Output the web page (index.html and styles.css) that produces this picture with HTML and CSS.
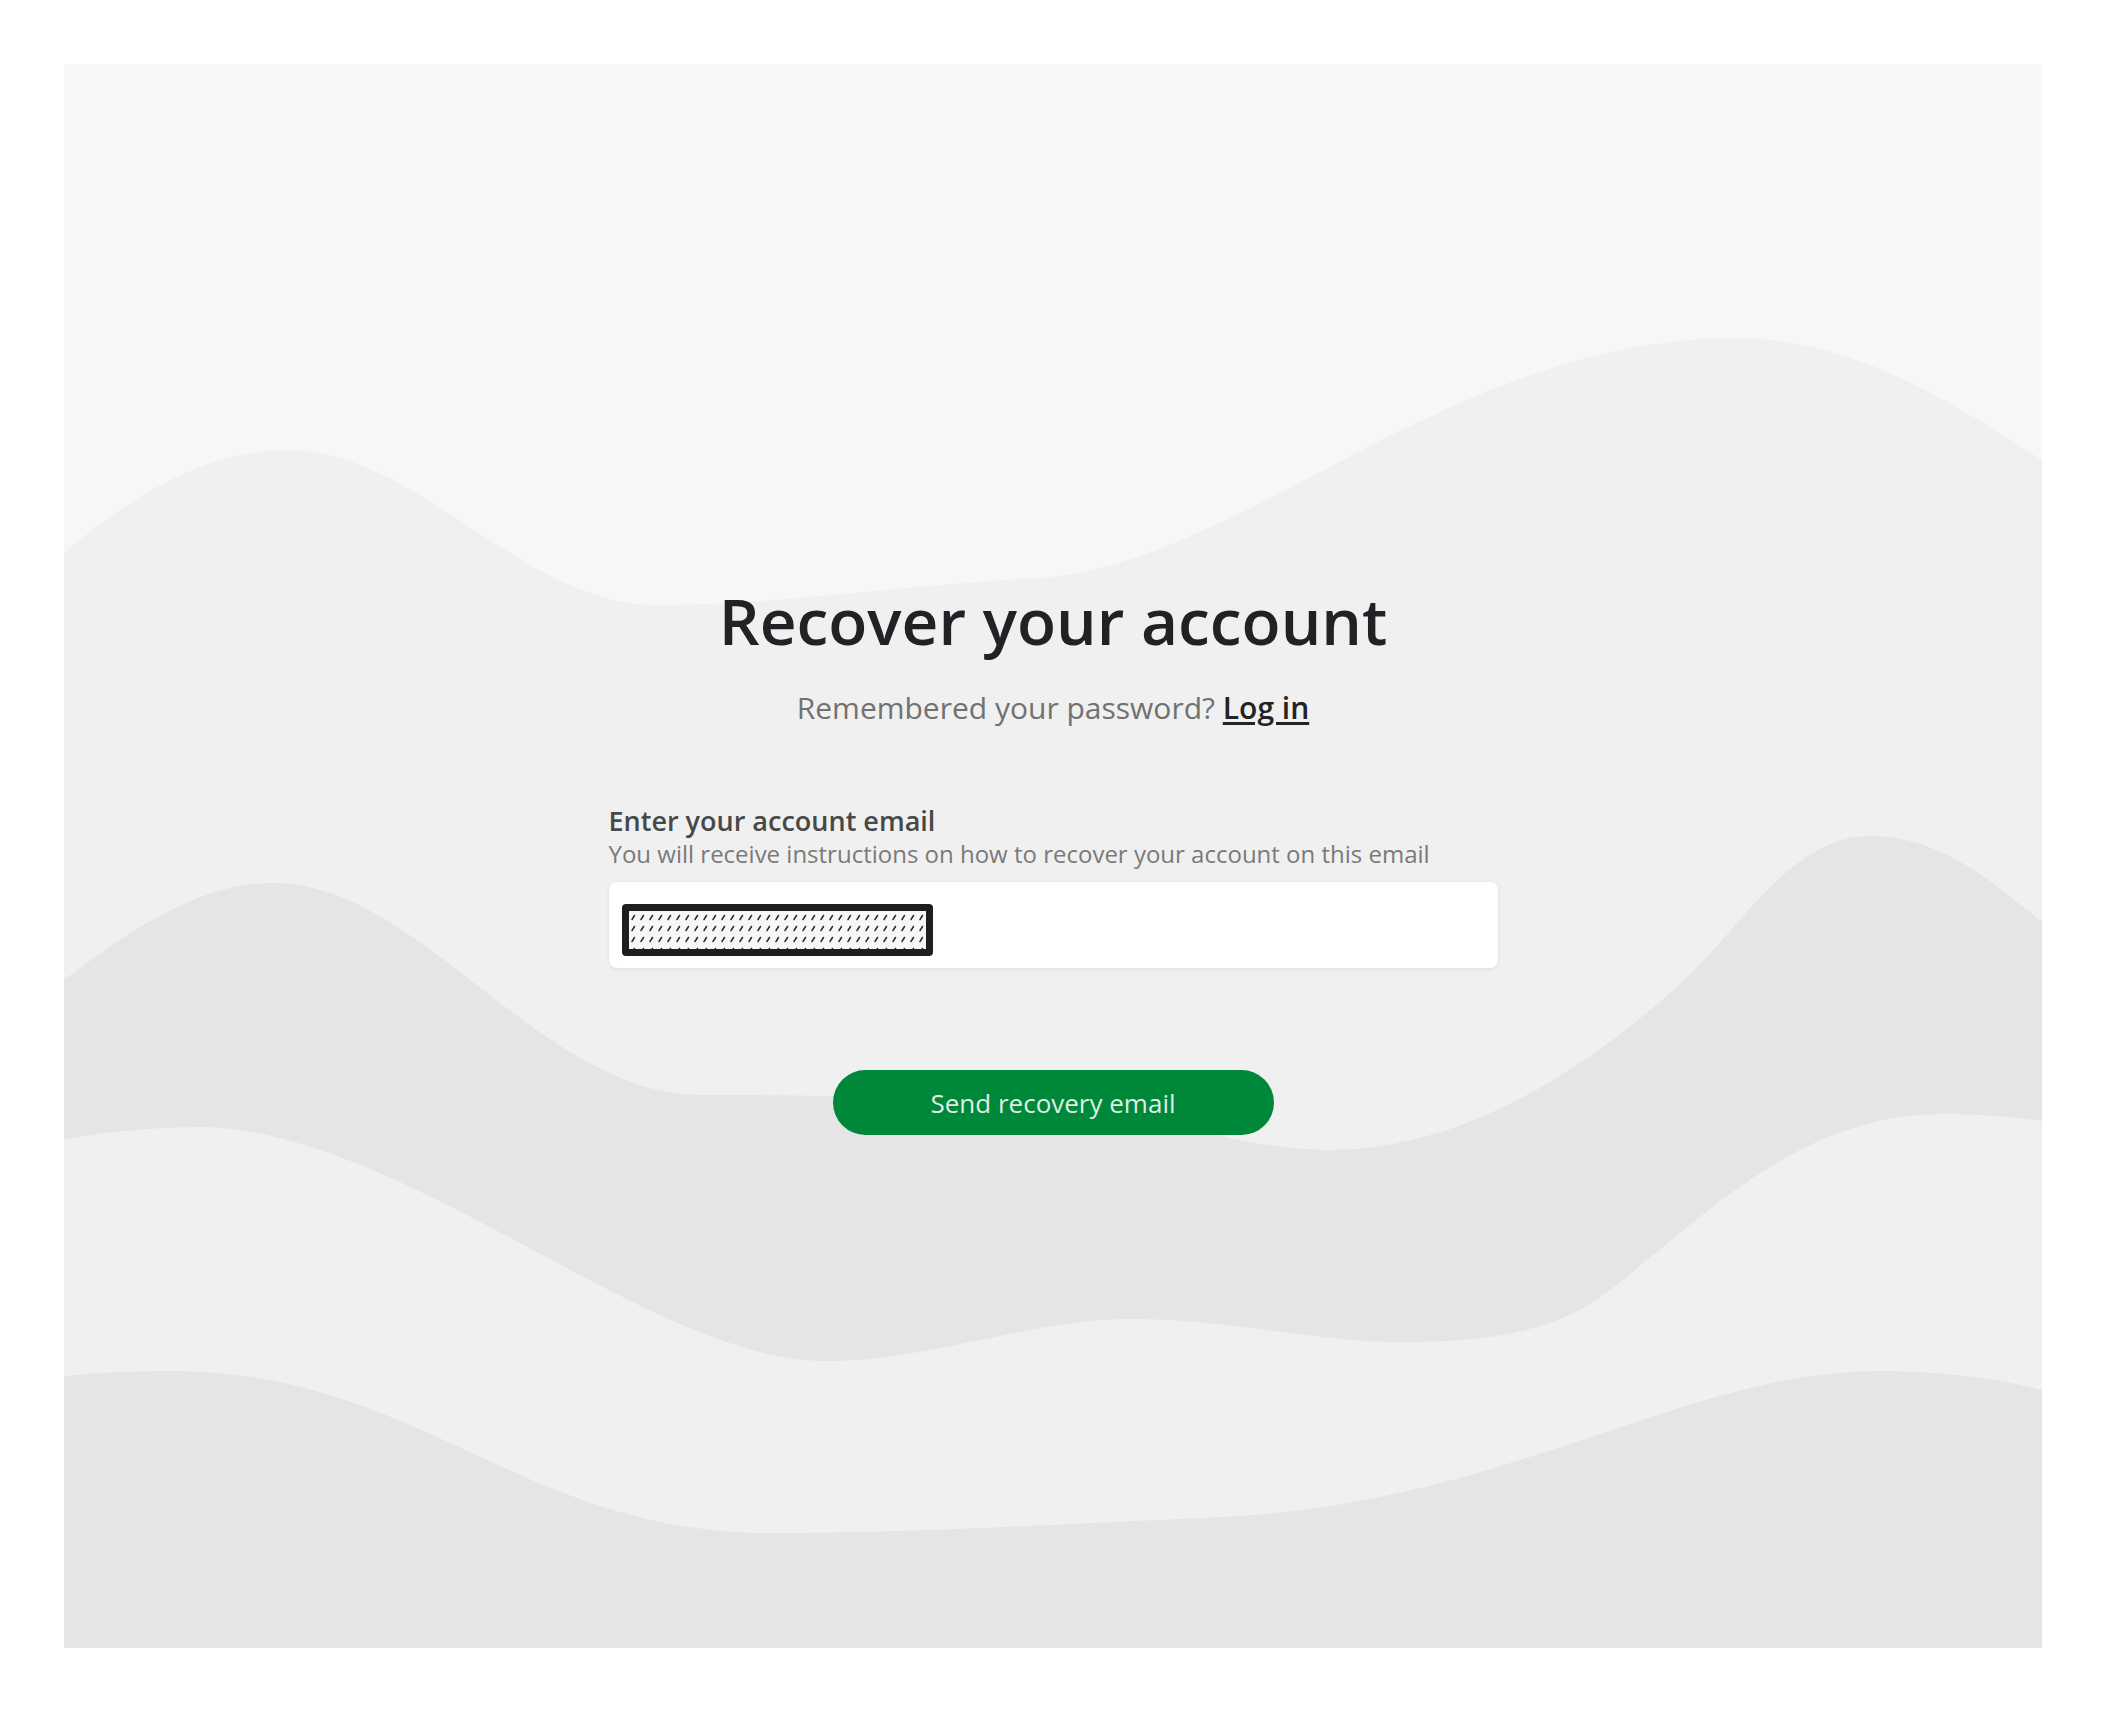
FILE: index.html
```html
<!DOCTYPE html>
<html lang="en">
<head>
<meta charset="utf-8">
<title>Recover your account</title>
<link rel="stylesheet" href="styles.css">
</head>
<body>
<div class="page">
  <main class="panel">
    <svg class="waves" viewBox="64 64 1978 1584" preserveAspectRatio="none" aria-hidden="true">
      <path class="wave-a" d="M64,553 C150,480 220,450 287,450 C420,450 520,605 657,605 C780,605 900,585 1042,578 C1250,560 1450,338 1737,338 C1850,338 1950,400 2042,460 L2042,1648 L64,1648 Z"/>
      <path class="wave-b" d="M64,980 C150,915 210,883 274,883 C420,883 540,1095 702,1095 C850,1095 950,1097 1064,1105 C1160,1115 1240,1150 1329,1150 C1480,1150 1610,1047 1680,984 C1740,930 1790,836 1871,836 C1940,836 1990,880 2042,922 L2042,1648 L64,1648 Z"/>
      <path class="wave-a" d="M64,1139 C120,1130 160,1127 210,1127 C420,1140 650,1361 827,1361 C930,1361 1030,1319 1130,1319 C1240,1319 1320,1345 1420,1342 C1520,1340 1570,1321 1610,1290 C1700,1220 1800,1114 1941,1114 C1980,1114 2010,1117 2042,1121 L2042,1648 L64,1648 Z"/>
      <path class="wave-b" d="M64,1376 C110,1372 140,1371 170,1371 C420,1371 520,1533 770,1533 C900,1533 1050,1525 1200,1518 C1500,1510 1680,1371 1880,1371 C1940,1371 1995,1378 2042,1390 L2042,1648 L64,1648 Z"/>
    </svg>
    <div class="content">
      <h1 class="title">Recover your account</h1>
      <p class="subtitle">Remembered your password? <a class="login" href="#">Log in</a></p>
      <form class="form">
        <label class="field-label" for="email">Enter your account email</label>
        <p class="field-help">You will receive instructions on how to recover your account on this email</p>
        <div class="input" id="email">
          <span class="masked">
            <svg class="hatch" width="100%" height="100%" aria-hidden="true">
              <defs>
                <pattern id="hatch" width="9" height="11" patternUnits="userSpaceOnUse">
                  <path d="M3 8.5 L5.5 4.5" stroke="#2a2a2a" stroke-width="1.5" stroke-linecap="round"/>
                </pattern>
              </defs>
              <rect width="100%" height="100%" fill="url(#hatch)"/>
            </svg>
          </span>
        </div>
        <button class="submit" type="button">Send recovery email</button>
      </form>
    </div>
  </main>
</div>
</body>
</html>
```
FILE: styles.css
```css
html, body {
  margin: 0;
  padding: 0;
  background: #ffffff;
}

body {
  font-family: "Open Sans", "Noto Sans", "Liberation Sans", sans-serif;
}

.page {
  padding: 64px;
  box-sizing: border-box;
  height: 1712px;
}

.panel {
  position: relative;
  height: 1584px;
  background: #f7f7f7;
  overflow: hidden;
  display: flex;
  flex-direction: column;
  align-items: center;
  padding-top: 519px;
  box-sizing: border-box;
}

.waves {
  position: absolute;
  left: 0;
  top: 0;
  width: 100%;
  height: 100%;
}

.wave-a { fill: #f0f0f0; }
.wave-b { fill: #e5e5e5; }

.content {
  position: relative;
  width: 889px;
  display: flex;
  flex-direction: column;
  align-items: center;
}

.title {
  margin: 0;
  font-size: 64px;
  line-height: 76px;
  font-weight: 600;
  color: #212225;
}

.subtitle {
  margin: 29px 0 0;
  font-size: 30px;
  line-height: 40px;
  color: #717171;
}

.login {
  color: #232323;
  font-weight: 600;
  text-decoration: underline;
  text-underline-offset: 3px;
}

.form {
  margin: 75px 0 0;
  width: 889px;
  display: flex;
  flex-direction: column;
}

.field-label {
  font-size: 27px;
  line-height: 35px;
  font-weight: 600;
  color: #484848;
}

.field-help {
  margin: 0;
  font-size: 24px;
  line-height: 32px;
  color: #7a7a7a;
}

.input {
  margin-top: 12px;
  height: 86px;
  box-sizing: border-box;
  background: #ffffff;
  border-radius: 8px;
  box-shadow: 0 1px 4px rgba(0, 0, 0, 0.08);
  display: flex;
  align-items: flex-start;
  padding: 22px 0 0 13px;
}

.masked {
  display: block;
  width: 311px;
  height: 52px;
  box-sizing: border-box;
  border: 7px solid #1e1e1e;
  border-radius: 4px;
  background: #f6f7f9;
}

.hatch {
  display: block;
}

.submit {
  align-self: center;
  margin-top: 102px;
  width: 441px;
  height: 65px;
  border: 0;
  border-radius: 33px;
  background: #00883a;
  color: rgba(255, 255, 255, 0.88);
  font-family: inherit;
  font-size: 26px;
  padding: 0;
  cursor: pointer;
}
```
